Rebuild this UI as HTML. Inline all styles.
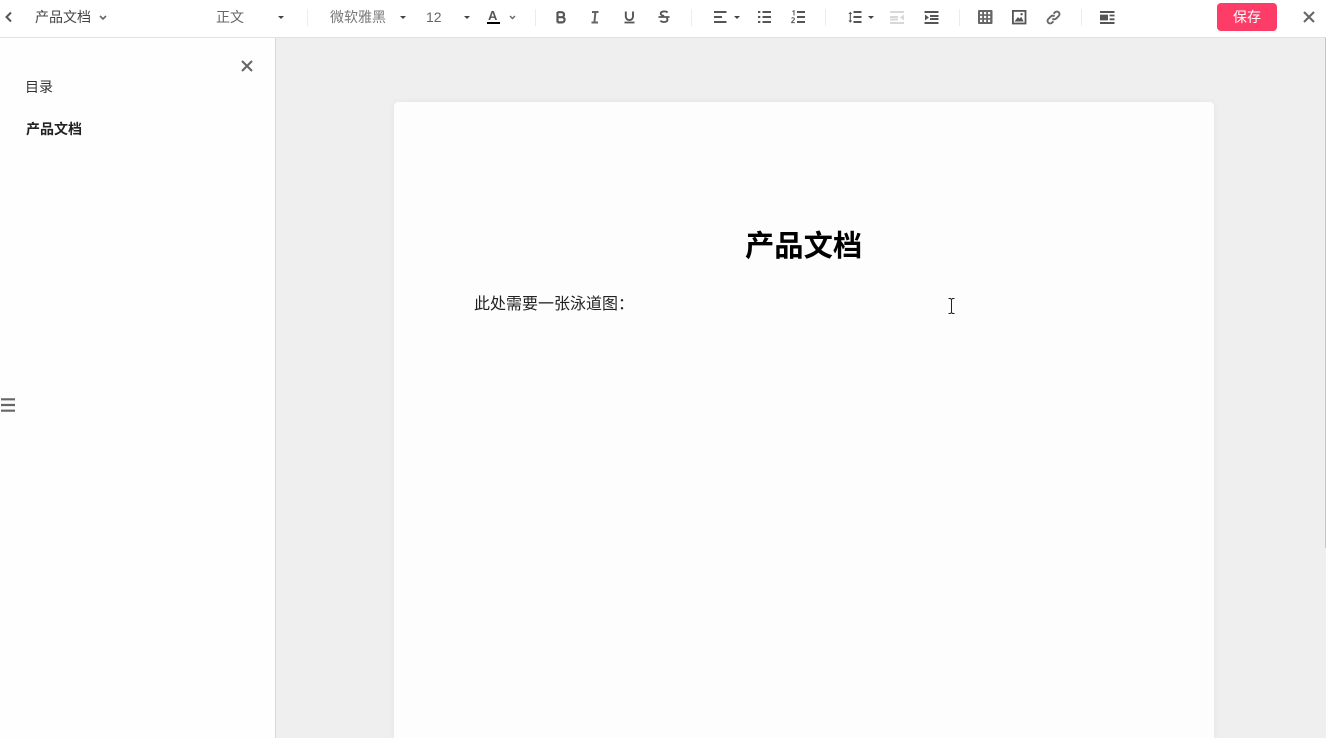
<!DOCTYPE html>
<html lang="zh">
<head>
<meta charset="utf-8">
<title>产品文档</title>
<style>
html,body{margin:0;padding:0;width:1326px;height:738px;overflow:hidden;background:#fff;}
body{position:relative;font-family:"Liberation Sans","Noto Sans CJK SC",sans-serif;}
.a{position:absolute;white-space:nowrap;}
.t{position:absolute;white-space:nowrap;font-size:14px;line-height:18px;height:18px;color:#666;}
#bar{position:absolute;left:0;top:0;width:1326px;height:37px;background:#fff;border-bottom:1px solid #e0e0e0;}
#side{position:absolute;left:0;top:38px;width:275px;height:700px;background:#fefefe;border-right:1px solid #d8d8d8;}
#main{position:absolute;left:276px;top:38px;width:1050px;height:700px;background:#efefef;}
#page{position:absolute;left:394px;top:102px;width:820px;height:660px;background:#fdfdfd;border-radius:4px;box-shadow:0 0 7px rgba(0,0,0,.05);}
#scroll{position:absolute;left:1325px;top:38px;width:1px;height:510px;background:#c4c4c4;}
.sep{position:absolute;top:9px;width:1px;height:17px;background:#ececec;}
.car{position:absolute;width:0;height:0;border-left:3px solid transparent;border-right:3px solid transparent;border-top:3px solid #444;}
svg{position:absolute;overflow:visible;}
#save{position:absolute;left:1217px;top:3px;width:60px;height:28px;border-radius:4px;background:#fd3d68;color:#fff;font-size:14px;line-height:28px;text-align:center;}
</style>
</head>
<body>
<div id="bar"></div>
<div id="side"></div>
<div id="main"></div>
<div id="page"></div>
<div id="scroll"></div>

<!-- toolbar left -->
<svg style="left:4px;top:11px" width="9" height="12" fill="none" stroke="#555" stroke-width="2"><path d="M7 1.5L2.5 6L7 10.5"/></svg>
<div class="t" style="left:35px;top:8px;color:#444">产品文档</div>
<svg style="left:99px;top:15px" width="8" height="5" fill="none" stroke="#666" stroke-width="1.6"><path d="M1 1L4 4L7 1"/></svg>
<div class="t" style="left:216px;top:8px">正文</div>
<div class="car" style="left:278px;top:16px"></div>
<div class="sep" style="left:307px"></div>
<div class="t" style="left:330px;top:8px;color:#777">微软雅黑</div>
<div class="car" style="left:400px;top:16px"></div>
<div class="t" style="left:426px;top:8px;color:#666">12</div>
<div class="car" style="left:464px;top:16px"></div>
<div class="t" style="left:488px;top:7px;font-size:13px;font-weight:bold;color:#555">A</div>
<div class="a" style="left:487px;top:22px;width:13px;height:2px;background:#000"></div>
<svg style="left:509px;top:15px" width="7" height="5" fill="none" stroke="#666" stroke-width="1.4"><path d="M1 1L3.5 3.5L6 1"/></svg>
<div class="sep" style="left:535px"></div>

<!-- B I U S -->
<svg style="left:556px;top:11px" width="10" height="13" fill="none" stroke="#555" stroke-width="2.2"><path d="M1.5 1v10.5M1.5 1.2H5.5a2.5 2.5 0 0 1 0 5H1.5M1.5 6.2H6a2.6 2.6 0 0 1 0 5.2H1.5"/></svg>
<svg style="left:590px;top:11px" width="10" height="13" fill="none" stroke="#666" stroke-width="2"><path d="M2 1H8.5M1.5 11.5H8M5.4 1L4.4 11.5"/></svg>
<svg style="left:624px;top:11px" width="11" height="13" fill="none" stroke="#555" stroke-width="1.9"><path d="M1.8 0.5V5.5a3.6 3.6 0 0 0 7.2 0V0.5"/><path d="M0.5 11.5H10.5" stroke-width="1.8"/></svg>
<svg style="left:658px;top:10px" width="12" height="14" fill="none" stroke="#555" stroke-width="1.8"><path d="M9.5 2.6C8.5 1 3 .8 2.7 3.4C2.5 5.4 5 5.6 6 6M2.5 10.6C3.6 12.6 9.5 12.6 9.5 9.8C9.5 9 9 8.4 8.4 8M0.5 7H11.5"/></svg>
<div class="sep" style="left:691px"></div>

<!-- align + lists -->
<svg style="left:714px;top:11px" width="13" height="13" stroke="#555" stroke-width="2"><path d="M0 1H12.5M0 6H8M0 11H12.5"/></svg>
<div class="car" style="left:734px;top:16px"></div>
<svg style="left:758px;top:11px" width="14" height="13" stroke="#555" stroke-width="2"><path d="M0 1H2.3M0 6H2.3M0 11H2.3M4.5 1H13M4.5 6H13M4.5 11H13"/></svg>
<svg style="left:791px;top:10px" width="15" height="14" stroke="#555" stroke-width="2"><path d="M6 2H14M6 7H14M6 12H14"/><path d="M1.5 1.5L3 .8V5.5" fill="none" stroke-width="1"/><path d="M.6 8.5C1 7.4 3.6 7.6 3.4 9C3.2 10.2 1 11 .6 12.6H3.8" fill="none" stroke-width="1"/></svg>
<div class="sep" style="left:825px"></div>

<!-- line height + indents -->
<svg style="left:848px;top:11px" width="14" height="13" fill="none" stroke="#555" stroke-width="2"><path d="M5.5 1H13.5M5.5 6H13.5M5.5 11H13.5"/><path d="M2.3 1.5V10.5" stroke-width="1.1"/><path d="M0.4 3L2.3 .8L4.2 3ZM0.4 9.5L2.3 11.8L4.2 9.5Z" fill="#555" stroke="none"/></svg>
<div class="car" style="left:868px;top:16px"></div>
<svg style="left:890px;top:11px" width="15" height="13" stroke="#d8d8d8" stroke-width="2"><path d="M0 1H14M0 6H8M0 8.5H8M0 12H14"/><path d="M14 3.5V9.5L10 6.5Z" fill="#d8d8d8" stroke="none"/></svg>
<svg style="left:924px;top:11px" width="15" height="13" stroke="#555" stroke-width="2"><path d="M0.5 1H14.5M6 5H14.5M6 8H14.5M0.5 12H14.5"/><path d="M1 3.5V9.5L5 6.5Z" fill="#555" stroke="none"/></svg>
<div class="sep" style="left:959px"></div>

<!-- table image link -->
<svg style="left:978px;top:10px" width="14" height="14"><rect width="14.5" height="14" rx="1" fill="#666"/><path d="M2 2h2.2v2.2H2zM6 2h2.2v2.2H6zM10 2h2.2v2.2H10zM2 5.9h2.2v2.2H2zM6 5.9h2.2v2.2H6zM10 5.9h2.2v2.2H10zM2 9.8h2.2V12H2zM6 9.8h2.2V12H6zM10 9.8h2.2V12H10z" fill="#fff"/></svg>
<svg style="left:1012px;top:10px" width="14" height="14"><rect x=".9" y=".9" width="12.6" height="12.6" fill="none" stroke="#555" stroke-width="1.8"/><path d="M2.5 11.5L6 7L7.5 8.8L9.2 6.8L11.6 11.5Z" fill="#555"/><circle cx="9.6" cy="4.2" r="1.2" fill="#555"/></svg>
<svg style="left:1046px;top:10px" width="15" height="15" fill="none" stroke="#666" stroke-width="1.9"><path d="M6.4 8.6a2.6 2.6 0 0 0 3.7 0l2.6-2.6a2.6 2.6 0 0 0-3.7-3.7L7.6 3.7"/><path d="M8.6 6.4a2.6 2.6 0 0 0-3.7 0L2.3 9a2.6 2.6 0 0 0 3.7 3.7l1.4-1.4"/></svg>
<div class="sep" style="left:1081px"></div>
<svg style="left:1100px;top:10.5px" width="15" height="13"><path d="M0 0H14.5V2H0zM0 11H14.5V13H0zM0 3.6H8V9.4H0zM9.6 3.6H14.5V5.4H9.6zM9.6 7.4H14.5V9.2H9.6z" fill="#555"/></svg>

<div id="save">保存</div>
<svg style="left:1303px;top:11px" width="12" height="12" fill="none" stroke="#666" stroke-width="2.1"><path d="M1 1L11 11M11 1L1 11"/></svg>

<!-- sidebar -->
<svg style="left:241px;top:60px" width="12" height="12" fill="none" stroke="#666" stroke-width="2.1"><path d="M1 1L11 11M11 1L1 11"/></svg>
<div class="t" style="left:25px;top:78px;color:#333">目录</div>
<div class="t" style="left:26px;top:120px;color:#222;font-weight:bold">产品文档</div>
<svg style="left:1px;top:398px" width="14" height="14" stroke="#666" stroke-width="2.2"><path d="M0 1.3H14M0 7H14M0 12.7H14"/></svg>

<!-- document -->
<div class="a" style="left:745px;top:229px;font-size:29.3px;line-height:35px;font-weight:bold;color:#000">产品文档</div>
<div class="a" style="left:474px;top:295px;font-size:16px;line-height:20px;color:#222">此处需要一张泳道图：</div>
<svg style="left:948px;top:298px" width="7" height="16" fill="none" stroke="#222" stroke-width="1"><path d="M.5 .5H2.5L3.5 1.5L4.5 .5H6.5M3.5 1.5V14.5M.5 15.5H2.5L3.5 14.5L4.5 15.5H6.5"/></svg>
</body>
</html>
